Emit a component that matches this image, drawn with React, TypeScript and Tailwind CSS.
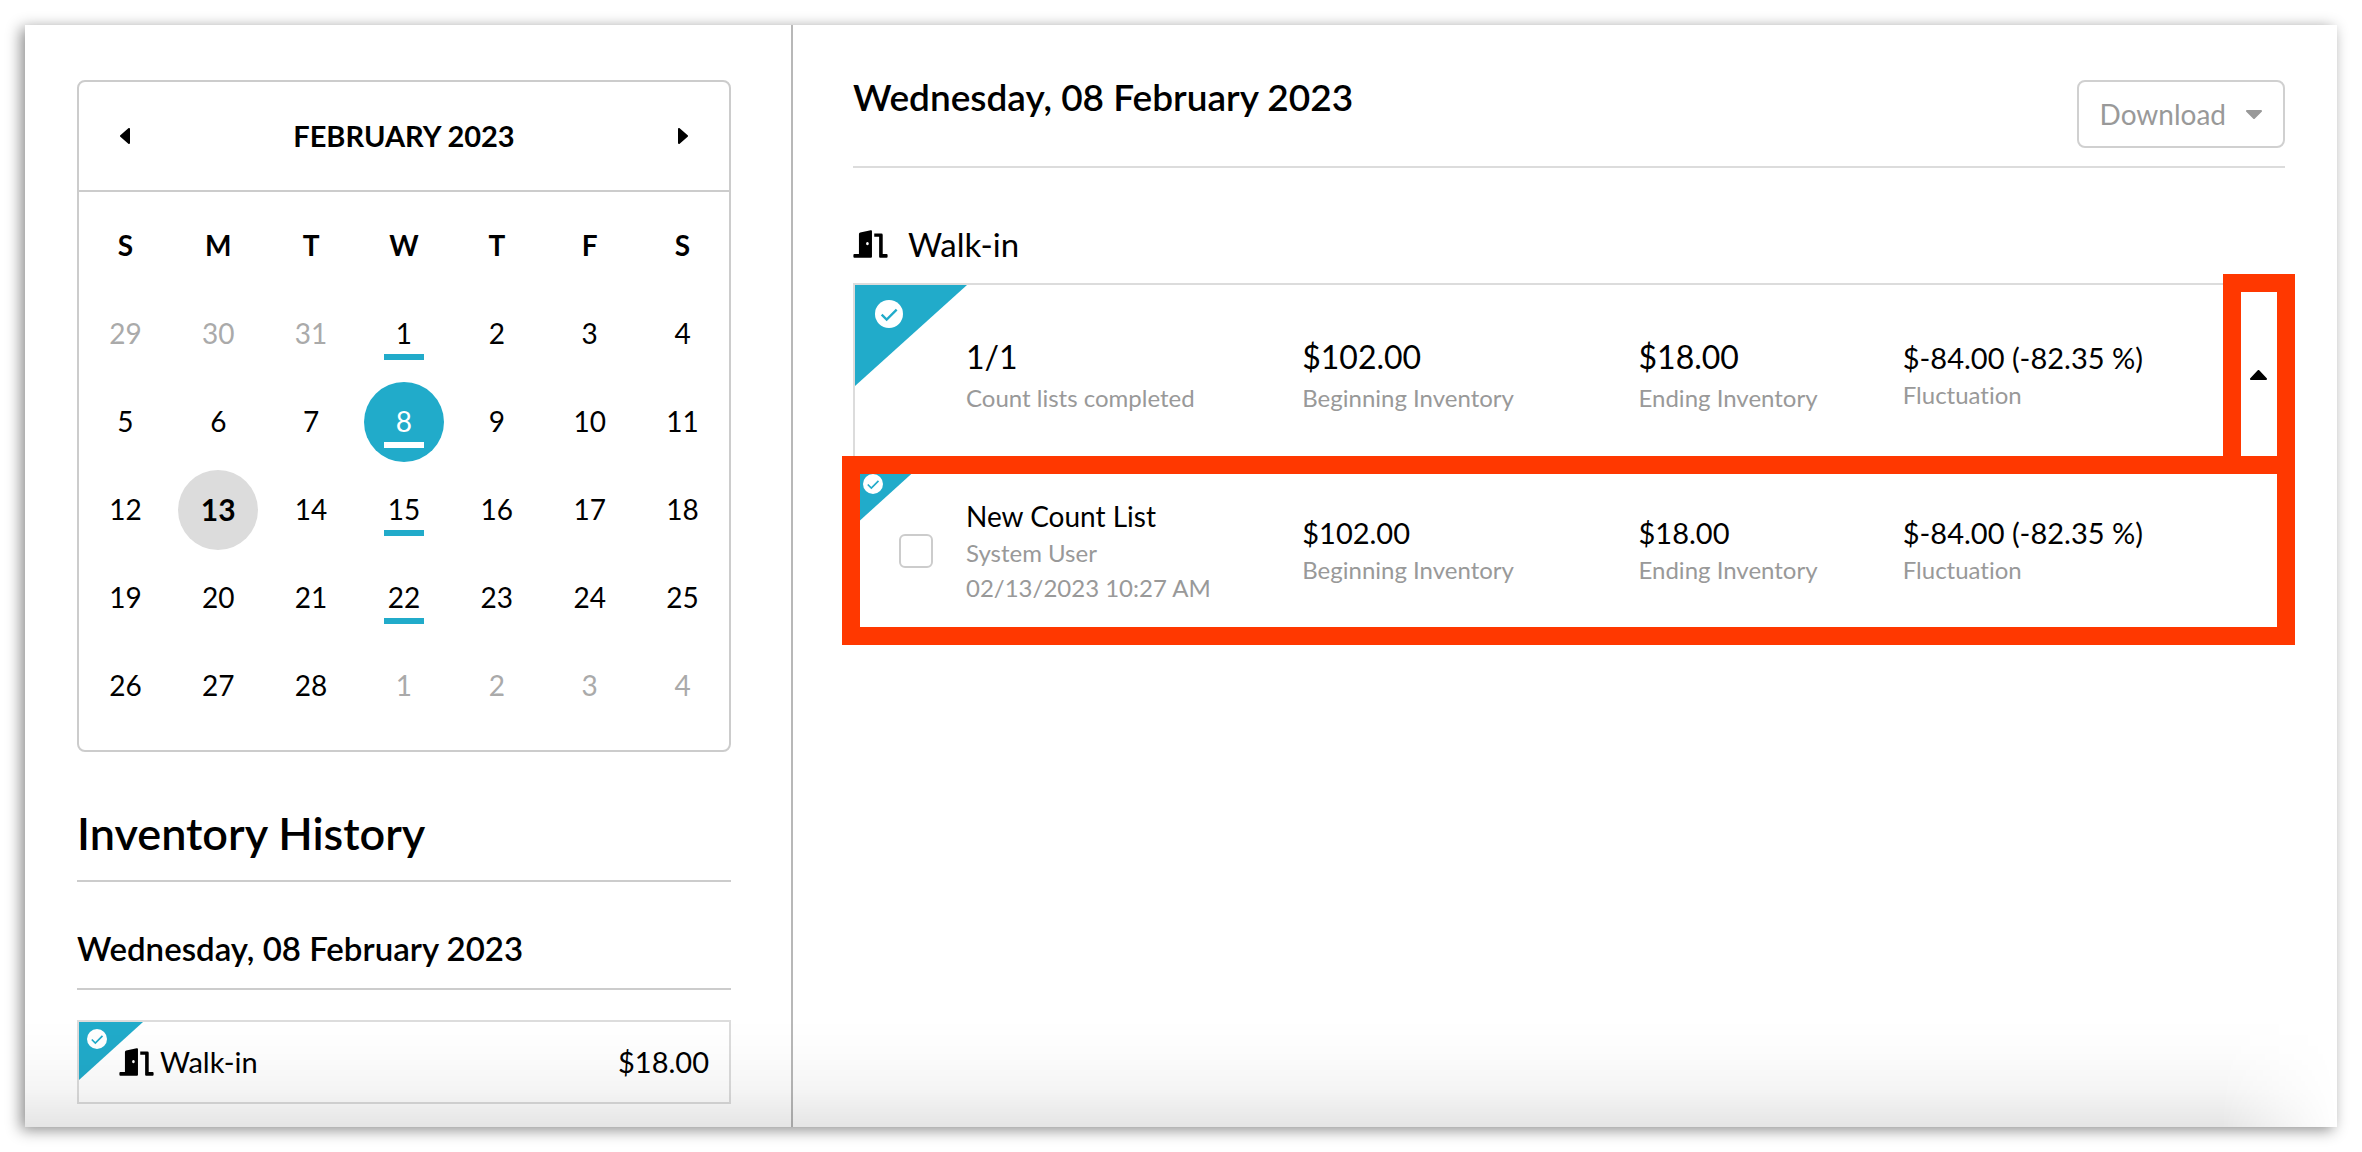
import { useState } from "react";

type Day = { n: number; outside?: boolean; counted?: boolean; today?: boolean };

const weekdays = ["S", "M", "T", "W", "T", "F", "S"];

const weeks: Day[][] = [
  [
    { n: 29, outside: true },
    { n: 30, outside: true },
    { n: 31, outside: true },
    { n: 1, counted: true },
    { n: 2 },
    { n: 3 },
    { n: 4 },
  ],
  [{ n: 5 }, { n: 6 }, { n: 7 }, { n: 8, counted: true }, { n: 9 }, { n: 10 }, { n: 11 }],
  [{ n: 12 }, { n: 13, today: true }, { n: 14 }, { n: 15, counted: true }, { n: 16 }, { n: 17 }, { n: 18 }],
  [{ n: 19 }, { n: 20 }, { n: 21 }, { n: 22, counted: true }, { n: 23 }, { n: 24 }, { n: 25 }],
  [
    { n: 26 },
    { n: 27 },
    { n: 28 },
    { n: 1, outside: true },
    { n: 2, outside: true },
    { n: 3, outside: true },
    { n: 4, outside: true },
  ],
];

function Caret({ className, points, box }: { className: string; points: string; box: string }) {
  return (
    <svg viewBox={box} className={className} aria-hidden="true">
      <polygon points={points} fill="currentColor" stroke="currentColor" strokeWidth="2" strokeLinejoin="round" />
    </svg>
  );
}

function DoorIcon() {
  return (
    <svg viewBox="0 0 105 86" className="h-7 w-[35px] shrink-0" fill="currentColor" aria-hidden="true">
      <path
        fillRule="evenodd"
        d="M3 74H17V13Q17 9 21 8L53 1Q57 0 57 4V82Q57 85 54 85H3Q0 85 0 82V77Q0 74 3 74ZM43 37a4 5 0 1 0 0.1 0Z"
      />
      <path d="M64 11H86Q90 11 90 15V74H102Q105 74 105 77V82Q105 85 102 85H82Q79 85 79 82V21H64Z" />
    </svg>
  );
}

function CheckCircle({ className }: { className: string }) {
  return (
    <svg viewBox="0 0 84 84" className={className} aria-hidden="true">
      <circle cx="42" cy="42" r="42" fill="#fff" />
      <path d="M20 44L35 59L65 29" fill="none" stroke="#21abca" strokeWidth="7" />
    </svg>
  );
}

function Corner({ large }: { large?: boolean }) {
  return large ? (
    <div className="absolute top-0 left-0 h-[101px] w-28">
      <div className="h-full w-full bg-[#21abca] [clip-path:polygon(0_0,100%_0,0_100%)]" />
      <CheckCircle className="absolute top-[15px] left-5 size-7" />
    </div>
  ) : (
    <div className="absolute top-0 left-0 h-[58px] w-16">
      <div className="h-full w-full bg-[#21abca] [clip-path:polygon(0_0,100%_0,0_100%)]" />
      <CheckCircle className="absolute top-[7px] left-2 size-5" />
    </div>
  );
}

function DayButton({ day, selected, onSelect }: { day: Day; selected: boolean; onSelect: () => void }) {
  let look = "text-[28px]";
  if (selected) look = "bg-[#21abca] text-[28px] text-white";
  else if (day.today) look = "bg-[#dcdcdc] text-[30px] font-bold";
  else if (day.outside) look = "text-[28px] text-[#aaaaaa]";
  return (
    <button
      type="button"
      onClick={onSelect}
      className={`relative inline-flex size-20 items-center justify-center rounded-full pb-0.5 align-middle leading-9 ${look}`}
    >
      {day.n}
      {day.counted && (
        <span className={`absolute bottom-3.5 left-5 h-1.5 w-10 ${selected ? "bg-white" : "bg-[#21abca]"}`} />
      )}
    </button>
  );
}

function Calendar() {
  const [selected, setSelected] = useState("1-3");
  return (
    <section aria-label="Calendar" className="rounded-lg border-2 border-[#cccccc]">
      <div className="grid h-[110px] grid-cols-7 items-center border-b-2 border-[#cccccc]">
        <button type="button" aria-label="Previous month" className="flex h-full items-center justify-center">
          <Caret box="0 0 10 16" points="9,1 9,15 1,8" className="h-4 w-2.5" />
        </button>
        <h1 className="col-span-5 text-center text-[29px] leading-9 font-bold">FEBRUARY 2023</h1>
        <button type="button" aria-label="Next month" className="flex h-full items-center justify-center">
          <Caret box="0 0 10 16" points="1,1 1,15 9,8" className="h-4 w-2.5" />
        </button>
      </div>
      <div className="pt-2.5 pb-5">
        <table className="w-full table-fixed text-center">
          <thead>
            <tr className="h-[88px]">
              {weekdays.map((d, i) => (
                <th key={i} scope="col" className="p-0 pb-0.5 text-center text-[28px] leading-9 font-bold">
                  {d}
                </th>
              ))}
            </tr>
          </thead>
          <tbody>
            {weeks.map((week, r) => (
              <tr key={r} className="h-[88px]">
                {week.map((day, c) => (
                  <td key={c} className="p-0">
                    <DayButton
                      day={day}
                      selected={selected === `${r}-${c}`}
                      onSelect={() => setSelected(`${r}-${c}`)}
                    />
                  </td>
                ))}
              </tr>
            ))}
          </tbody>
        </table>
      </div>
    </section>
  );
}

function Label({ children }: { children: string }) {
  return <div className="text-2xl leading-8 text-[#999999]">{children}</div>;
}

function BigStat({ value, label }: { value: string; label: string }) {
  return (
    <div className="flex flex-col gap-[5px] whitespace-nowrap">
      <div className="text-[32px] leading-10">{value}</div>
      <Label>{label}</Label>
    </div>
  );
}

function Stat({ value, label }: { value: string; label: string }) {
  return (
    <div className="flex flex-col gap-[3px] whitespace-nowrap">
      <div className="text-[29px] leading-9">{value}</div>
      <Label>{label}</Label>
    </div>
  );
}

export default function App() {
  return (
    <div className="flex min-h-screen bg-white p-[25px] font-['Lato',sans-serif] text-black [font-variant-ligatures:none]">
      <div className="relative flex flex-1 bg-white shadow-[-4px_3px_14px_rgba(0,0,0,0.45)]">
        <aside className="w-192 shrink-0 border-r-2 border-[#b8b8b8] pt-[55px] pr-15 pb-[23px] pl-[52px]">
          <Calendar />
          <h2 className="mt-[53px] border-b-2 border-[#cccccc] pb-[19px] text-[45px] leading-[56px] font-semibold">
            Inventory History
          </h2>
          <h3 className="mt-[46px] border-b-2 border-[#cccccc] pb-5 text-[33px] leading-10 font-semibold">
            Wednesday, 08 February 2023
          </h3>
          <div className="relative mt-[30px] flex h-[84px] items-center justify-between border-2 border-[#dcdcdc] pr-5 pl-10 text-[29px] leading-9">
            <Corner />
            <div className="flex items-center gap-1.5">
              <DoorIcon />
              <span>Walk-in</span>
            </div>
            <span>$18.00</span>
          </div>
        </aside>

        <main className="min-w-0 flex-1 pt-[55px] pr-[52px] pl-15">
          <header className="flex items-start justify-between border-b-2 border-[#dcdcdc] pb-[18px]">
            <h2 className="text-[37px] leading-[34px] font-semibold">Wednesday, 08 February 2023</h2>
            <button
              type="button"
              className="flex h-[68px] items-center gap-5 rounded-lg border-2 border-[#d0d0d0] px-[21px] text-[28px] leading-9 text-[#999999]"
            >
              Download
              <Caret box="0 0 16 9" points="1,1 15,1 8,8" className="h-[9px] w-4" />
            </button>
          </header>

          <div className="mt-14 mb-[19px] flex items-center gap-5 text-[33px] leading-10">
            <DoorIcon />
            <h3>Walk-in</h3>
          </div>

          <section className="border-2 border-[#dcdcdc]">
            <div className="relative grid h-[182px] grid-cols-[111px_14fr_14fr_11fr_14fr_44px] items-center border-b-2 border-[#dcdcdc]">
              <Corner large />
              <span />
              <BigStat value="1/1" label="Count lists completed" />
              <BigStat value="$102.00" label="Beginning Inventory" />
              <BigStat value="$18.00" label="Ending Inventory" />
              <Stat value="$-84.00 (-82.35 %)" label="Fluctuation" />
              <button
                type="button"
                aria-label="Collapse Walk-in"
                aria-expanded="true"
                className="flex h-full items-center justify-center pr-1.5"
              >
                <Caret box="0 0 17 10" points="1,9 16,9 8.5,1" className="h-2.5 w-[17px]" />
              </button>
              <div className="pointer-events-none absolute -top-[11px] -right-3 -bottom-[9px] w-18 border-18 border-[#ff3800]" />
            </div>

            <div className="relative grid h-[167px] grid-cols-[111px_14fr_14fr_11fr_14fr_44px] items-center">
              <Corner />
              <div className="flex pl-11">
                <input
                  type="checkbox"
                  aria-label="Select New Count List"
                  className="size-[34px] appearance-none rounded-md border-2 border-[#cccccc] bg-white checked:bg-[#21abca]"
                />
              </div>
              <div className="flex flex-col gap-[3px] whitespace-nowrap">
                <div className="text-[28px] leading-9">New Count List</div>
                <Label>System User</Label>
                <Label>02/13/2023 10:27 AM</Label>
              </div>
              <Stat value="$102.00" label="Beginning Inventory" />
              <Stat value="$18.00" label="Ending Inventory" />
              <Stat value="$-84.00 (-82.35 %)" label="Fluctuation" />
              <div className="pointer-events-none absolute -top-[11px] -right-3 -bottom-[11px] -left-[13px] border-18 border-[#ff3800]" />
            </div>
          </section>
        </main>

        <div className="pointer-events-none absolute inset-x-0 bottom-0 h-27 bg-[linear-gradient(to_bottom,rgba(0,0,0,0)_0%,rgba(0,0,0,0.01)_30%,rgba(0,0,0,0.04)_65%,rgba(0,0,0,0.1)_100%)] [mask-image:linear-gradient(to_left,transparent_0%,black_5%)]" />
      </div>
    </div>
  );
}
